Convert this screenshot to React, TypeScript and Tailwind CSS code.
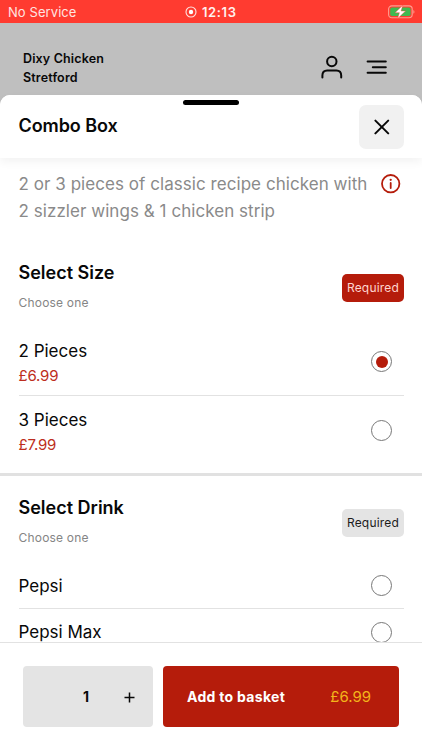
import React from "react";

function StatusBar() {
  return (
    <div className="relative flex h-[23px] shrink-0 items-center justify-between bg-[#ff3b30] pr-[7px] pl-[8px] text-[13px] leading-[23px] text-[#ffe4e1]">
      <span className="pt-px tracking-[0.08px]">No Service</span>
      <div className="absolute inset-y-0 left-[185px] flex items-center gap-[5px]">
        <svg width="12" height="12" viewBox="0 0 12 12" fill="none">
          <circle cx="6" cy="6" r="5" stroke="#ffe4e1" strokeWidth="1.1" />
          <circle cx="6" cy="6" r="2.2" fill="#fff" />
        </svg>
        <span className="pt-px text-[13px] font-semibold tracking-[0.6px] text-[#fff0ee]">12:13</span>
      </div>
      <svg width="27" height="14" viewBox="0 0 27 14" fill="none">
        <rect x="0.6" y="0.9" width="23.6" height="11.8" rx="3.2" stroke="#ff9d8f" strokeWidth="1.1" />
        <rect x="2.2" y="2.5" width="20.4" height="8.6" rx="1.8" fill="#3fb950" />
        <path d="M25.4 5c1.4.5 1.4 3.3 0 3.8z" fill="#ff9d8f" />
        <path d="M14.8.2 7 7.7h4.4L9.6 13.6l8-7.6h-4.5z" fill="#fff" stroke="#ff3b30" strokeWidth=".4" />
      </svg>
    </div>
  );
}

function Radio({ checked = false }: { checked?: boolean }) {
  return (
    <span className="mr-[12px] flex size-[21px] shrink-0 items-center justify-center rounded-full border border-[#777]">
      {checked && <span className="size-[12px] rounded-full bg-[#b51c0b]" />}
    </span>
  );
}

function GroupHeader({ title, done = false }: { title: string; done?: boolean }) {
  return (
    <div className="flex items-center justify-between">
      <div>
        <h2 className="text-[18px] leading-[24px] font-semibold">{title}</h2>
        <p className="mt-[8px] text-[12px] leading-[20px] tracking-[0.2px] text-[#858585]">Choose one</p>
      </div>
      <span
        className={`mt-[2px] flex h-[28px] w-[62px] items-center justify-center rounded-[5px] text-[12px] tracking-[0.2px] ${
          done ? "bg-[#b51c0b] text-[#ffd5cf]" : "bg-[#e4e4e4] text-[#1c1c1c]"
        }`}
      >
        Required
      </span>
    </div>
  );
}

function PricedOption({ name, price, checked = false }: { name: string; price: string; checked?: boolean }) {
  return (
    <div className="flex h-[68px] items-center justify-between">
      <div className="pt-[3px]">
        <p className="text-[17px] leading-[24px]">{name}</p>
        <p className="mt-px text-[15px] leading-[23px] tracking-[-0.2px] text-[#bd2d20]">{price}</p>
      </div>
      <Radio checked={checked} />
    </div>
  );
}

export default function App() {
  return (
    <div className="flex h-[750px] w-[422px] flex-col overflow-hidden bg-[#bfbfbf] font-['Inter',sans-serif] text-[#080808]">
      <StatusBar />
      <header className="flex h-[72px] shrink-0 justify-between pl-[23px]">
        <p className="pt-[26px] text-[12.5px] leading-[19px] font-semibold tracking-[0.15px]">
          Dixy Chicken
          <br />
          Stretford
        </p>
        <div className="mt-[32px] mr-[34px] flex gap-[23px]">
          <svg width="22" height="24" viewBox="0 0 22 24" fill="none" stroke="#080808" strokeWidth="2" strokeLinecap="round">
            <circle cx="10.8" cy="6.5" r="4.7" />
            <path d="M1.4 22.4v-1.8c0-3.2 2-5 4.8-5h9.2c2.8 0 4.8 1.8 4.8 5v1.8" />
          </svg>
          <svg width="22" height="24" viewBox="0 0 22 24" fill="none" stroke="#080808" strokeWidth="2" strokeLinecap="round">
            <path d="M1.6 6.5h18.2M6.8 12.2h13M1.6 17.7h18.2" />
          </svg>
        </div>
      </header>

      <main className="flex min-h-0 flex-1 flex-col rounded-t-[10px] bg-white">
        <div className="relative z-10 flex h-[63px] shrink-0 items-start justify-between rounded-t-[10px] bg-white pr-[18px] pl-[18.5px] shadow-[0_4px_10px_rgba(0,0,0,0.05)]">
          <span className="absolute top-[5px] left-[183px] h-[5px] w-[56px] rounded-full bg-black" />
          <h1 className="pt-[19px] text-[18px] leading-[24px] font-semibold tracking-[-0.08px]">Combo Box</h1>
          <button className="mt-[10px] flex h-[44px] w-[45px] items-center justify-center rounded-[7px] bg-[#f1f1f1]">
            <svg width="16" height="16" viewBox="0 0 16 16" fill="none" stroke="#080808" strokeWidth="2" strokeLinecap="round">
              <path d="M1.4 1.6 14.2 14.4M14.2 1.6 1.4 14.4" />
            </svg>
          </button>
        </div>

        <div className="min-h-0 flex-1 overflow-hidden">
          <div className="flex items-start justify-between pt-[13px] pr-[21px] pl-[18.5px]">
            <p className="text-[17px] leading-[27px] tracking-[0.05px] whitespace-nowrap text-[#8a8a8a]">
              2 or 3 pieces of classic recipe chicken with
              <br />2 sizzler wings &amp; 1 chicken strip
            </p>
            <svg className="mt-[3px]" width="20" height="20" viewBox="0 0 20 20" fill="none">
              <circle cx="9.7" cy="9.7" r="8.7" stroke="#b51c0b" strokeWidth="1.8" />
              <path d="M9.7 9v5" stroke="#b51c0b" strokeWidth="1.8" strokeLinecap="round" />
              <circle cx="9.7" cy="5.8" r="1.15" fill="#b51c0b" />
            </svg>
          </div>

          <section className="border-b-[3px] border-[#e1e1e1] pt-[36px] pr-[18px] pb-[9px] pl-[18.5px]">
            <GroupHeader title="Select Size" done />
            <div className="mt-[15px] divide-y divide-[#e2e2e2]">
              <PricedOption name="2 Pieces" price="£6.99" checked />
              <PricedOption name="3 Pieces" price="£7.99" />
            </div>
          </section>

          <section className="pt-[20px] pr-[18px] pl-[18.5px]">
            <GroupHeader title="Select Drink" />
            <div className="mt-[15px] divide-y divide-[#e2e2e2]">
              {["Pepsi", "Pepsi Max"].map((name) => (
                <div key={name} className="flex h-[46px] items-center justify-between text-[17px]">
                  <span className="pt-[2px]">{name}</span>
                  <Radio />
                </div>
              ))}
            </div>
          </section>
        </div>

        <footer className="flex h-[108px] shrink-0 gap-[10px] border-t border-[#e2e2e2] bg-white pt-[23px] pr-[23px] pl-[23px] text-[14px]">
          <div className="flex h-[61px] w-[130px] items-center rounded-[4px] bg-[#e4e4e4]">
            <span className="ml-[60px] font-bold">1</span>
            <svg className="mt-[2px] mr-[18px] ml-auto" width="11" height="11" viewBox="0 0 11 11" stroke="#080808" strokeWidth="1.5">
              <path d="M5.5.5v10M.5 5.5h10" />
            </svg>
          </div>
          <button className="flex h-[61px] flex-1 items-center justify-between rounded-[4px] bg-[#b51c0b] pr-[28px] pl-[24px]">
            <span className="font-bold tracking-[0.3px] text-white">Add to basket</span>
            <span className="pt-px text-[15px] text-[#f3b41b]">£6.99</span>
          </button>
        </footer>
      </main>
    </div>
  );
}
